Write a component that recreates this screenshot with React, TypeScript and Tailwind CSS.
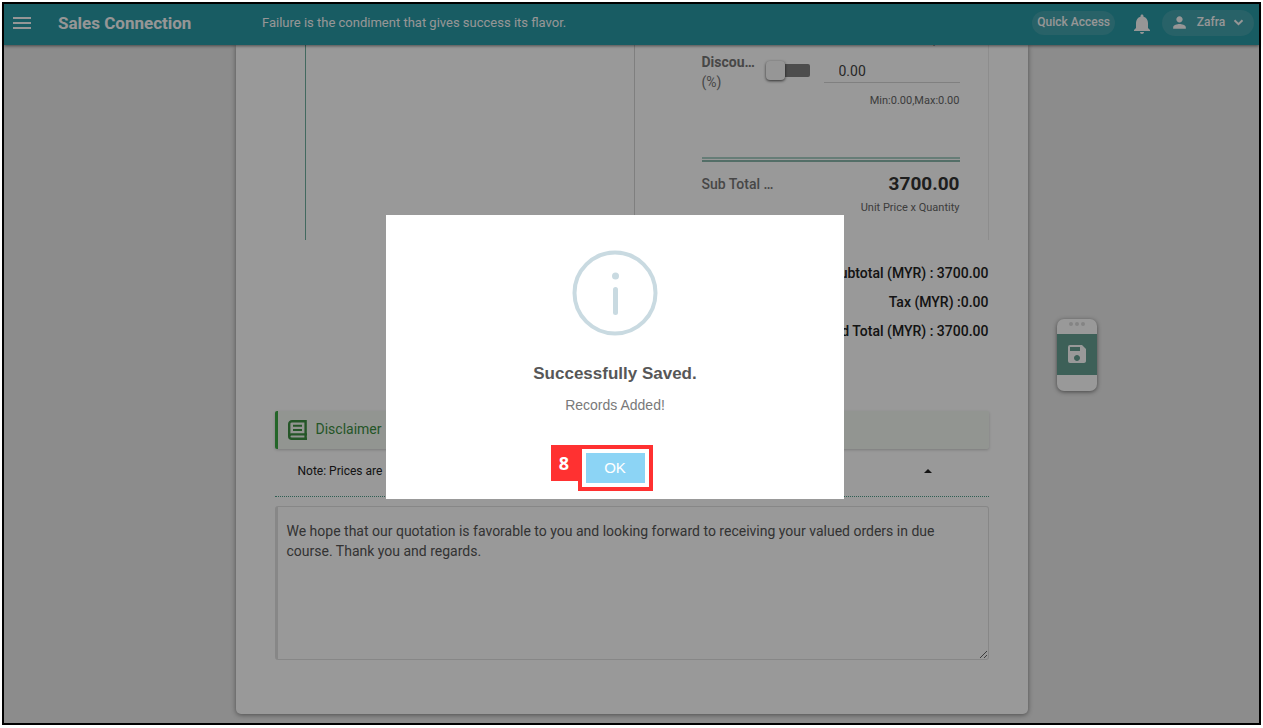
import React from "react";
import { MdMenu, MdNotifications, MdPerson, MdSave } from "react-icons/md";

function TopBar() {
  return (
    <header className="relative z-10 flex h-[41px] shrink-0 items-center bg-[#2899a5] pr-[5px] text-[#fafafa] shadow-[0_1px_3px_rgba(0,0,0,0.5)]">
      <button type="button" aria-label="Menu" className="ml-[6px] flex w-6 pb-1">
        <MdMenu size={24} />
      </button>
      <h1 className="ml-6 w-[204px] pb-1 text-[17px] leading-6 font-bold">Sales Connection</h1>
      <p className="flex-1 pb-1 text-[13px] leading-5">Failure is the condiment that gives success its flavor.</p>
      <button type="button" className="mb-1 h-6 rounded-full bg-[#43a3ad] px-[5px] pb-[2px] text-xs font-medium">
        Quick Access
      </button>
      <button type="button" aria-label="Notifications" className="ml-[15px] flex w-6 pb-px">
        <MdNotifications size={24} />
      </button>
      <button type="button" className="mb-1 ml-2 flex h-[26px] w-[92px] items-center justify-between rounded-full bg-[#43a3ad] pr-[10px] pl-2 text-xs font-medium">
        <MdPerson size={19} />
        <span className="pb-[2px]">Zafra</span>
        <svg width="11" height="7" viewBox="0 0 11 7" fill="none" stroke="currentColor" strokeWidth="2">
          <path d="M1.500 1.200l4 4 4-4" />
        </svg>
      </button>
    </header>
  );
}

function LineItem() {
  return (
    <section className="ml-[30px] flex h-[195px] border-l border-[#6eb09f]">
      <div className="flex-1" />
      <div className="w-[355px] border-x border-r-[#ececec] border-l-[#d4d4d4] pr-7 pl-[67px]">
        <div className="-mt-3 h-[19px] text-right text-xs leading-4 text-[#777]">Price/Unit</div>
        <div className="flex">
          <label htmlFor="discount" className="w-16 text-sm leading-5 text-[#777]">
            <b className="font-bold">Discou…</b>
            <br />
            (%)
          </label>
          <button type="button" role="switch" aria-checked="false" aria-label="Discount in percent" className="mt-[9px] flex h-[19px] w-[44px] items-center">
            <span className="z-1 size-[19px] shrink-0 rounded-[4px] bg-[#fafafa] shadow-[0_1px_3px_rgba(0,0,0,0.7)]" />
            <span className="h-[13px] flex-1 rounded-r-[2px] bg-[#808080]" />
          </button>
          <div className="ml-auto w-[136px] text-right">
            <input id="discount" defaultValue="0.00" className="mt-[7px] block h-6 w-full border-b border-[#d5d5d5] pl-[15px] text-sm text-[#444] outline-none" />
            <p className="mt-[10px] text-[11px] leading-4 text-[#666]">Min:0.00,Max:0.00</p>
          </div>
        </div>
        <div className="mt-12 h-[5px] border-y-2 border-t-[#abd0c6] border-b-[#8bb8ac]" />
        <div className="mt-[10px] flex items-center justify-between">
          <b className="text-sm leading-5 font-medium text-[#777]">Sub Total …</b>
          <b className="text-[19px] leading-6 font-bold text-[#333]">3700.00</b>
        </div>
        <p className="mt-1 text-right text-[11px] leading-4 text-[#666]">Unit Price x Quantity</p>
      </div>
    </section>
  );
}

function BookIcon() {
  return (
    <svg width="19" height="20" viewBox="0 0 19 20" fill="none" stroke="currentColor" strokeWidth="2.4">
      <path d="M17.600 14.400V1.200H4a2.800 2.800 0 0 0-2.800 2.800v12.200A2.600 2.600 0 0 0 3.800 18.800H19M1.400 16.200a2 2 0 0 1 2-1.800H19M17.600 14.400v4.400" />
      <path d="M5 5.700h9M5 9.900h9" strokeWidth="2" />
    </svg>
  );
}

function Quotation() {
  return (
    <main className="flex flex-col rounded-b-[5px] bg-white px-[39px] shadow-[0_1px_5px_rgba(0,0,0,0.45)]">
      <LineItem />
      <div className="mt-[19px] text-right text-sm leading-[29px] font-medium text-[#222]">
        <p>Subtotal (MYR) : 3700.00</p>
        <p>Tax (MYR) :0.00</p>
        <p>Grand Total (MYR) : 3700.00</p>
      </div>
      <h2 className="mt-[65px] flex h-[38px] items-center gap-[9px] rounded-[2px] border-l-[3px] border-[#3da845] bg-[#f4f9f2] pl-[10px] text-sm text-[#3c8f42] shadow-[0_1px_3px_rgba(0,0,0,0.2)]">
        <BookIcon />
        <span className="pb-[2px]">Disclaimer</span>
      </h2>
      <div className="flex h-12 items-center justify-between border-b border-dotted border-[#4f9e8a] pr-[57px] pb-1 pl-[23px] text-xs text-[#222]">
        <span>Note: Prices are</span>
        <button type="button" aria-label="Collapse note">
          <svg width="8" height="4" viewBox="0 0 8 4"><path d="M0 4L4 0l4 4z" fill="currentColor" /></svg>
        </button>
      </div>
      <textarea
        aria-label="Disclaimer text"
        className="mt-[9px] h-[154px] w-full resize-y rounded-[3px] border border-l-[3px] border-[#e2e2e2] px-[9px] pt-[14px] text-sm leading-5 text-[#555] outline-none"
        defaultValue="We hope that our quotation is favorable to you and looking forward to receiving your valued orders in due course. Thank you and regards."
      />
      <div className="h-[54px]" />
    </main>
  );
}

function SaveDock() {
  return (
    <aside className="mt-[274px] ml-[29px] flex h-[72px] w-10 flex-col overflow-hidden rounded-[7px] bg-white shadow-[0_1px_4px_rgba(0,0,0,0.5)]">
      <div className="flex h-[15px] justify-center gap-[2px] pt-[3px]">
        <i className="size-1 rounded-full bg-[#ddd]" />
        <i className="size-1 rounded-full bg-[#ddd]" />
        <i className="size-1 rounded-full bg-[#ddd]" />
      </div>
      <button type="button" aria-label="Save" className="flex h-[41px] items-center justify-center bg-[#66a093] pb-[2px] text-white">
        <MdSave size={24} />
      </button>
    </aside>
  );
}

function SavedDialog() {
  return (
    <div className="absolute inset-0 z-20 flex items-center justify-center bg-black/40 pr-[33px] pb-[13px]">
      <div role="dialog" aria-labelledby="saved-title" className="flex w-[458px] flex-col items-center bg-white pt-[35px] pb-2">
        <svg width="86" height="86" viewBox="0 0 86 86" fill="none" stroke="#c9dae1">
          <circle cx="43" cy="43" r="40.500" strokeWidth="4" />
          <circle cx="43.500" cy="26" r="3.500" fill="#c9dae1" stroke="none" />
          <path d="M43.500 39.500v23" strokeWidth="5" strokeLinecap="round" />
        </svg>
        <h2 id="saved-title" className="mt-[26px] text-[17px] leading-6 font-bold text-[#575757] [font-family:'Liberation_Sans',Arial,sans-serif]">
          Successfully Saved.
        </h2>
        <p className="mt-[9px] text-sm leading-5 text-[#797979] [font-family:'Liberation_Sans',Arial,sans-serif]">Records Added!</p>
        <div className="mt-[30px] flex items-start pr-[27px]">
          <span className="flex h-9 w-[27px] items-center justify-center bg-[#ff3131] text-lg font-bold text-white [font-family:'Open_Sans',sans-serif]">8</span>
          <div className="border-4 border-[#ff3131] p-1">
            <button type="button" className="block h-[30px] w-[59px] bg-[#8cd4f5] text-[15px] text-white [font-family:'Liberation_Sans',Arial,sans-serif]">
              OK
            </button>
          </div>
        </div>
      </div>
    </div>
  );
}

export default function App() {
  return (
    <div className="flex min-h-screen flex-col bg-white px-[2px] pt-[2px] pb-[3px] [font-family:Roboto,sans-serif]">
      <div className="relative flex flex-1 flex-col border-2 border-black bg-[#e9e9e9]">
        <TopBar />
        <div className="grid flex-1 grid-cols-[1fr_minmax(0,792px)_1fr] items-start">
          <div />
          <Quotation />
          <SaveDock />
        </div>
        <SavedDialog />
      </div>
    </div>
  );
}
